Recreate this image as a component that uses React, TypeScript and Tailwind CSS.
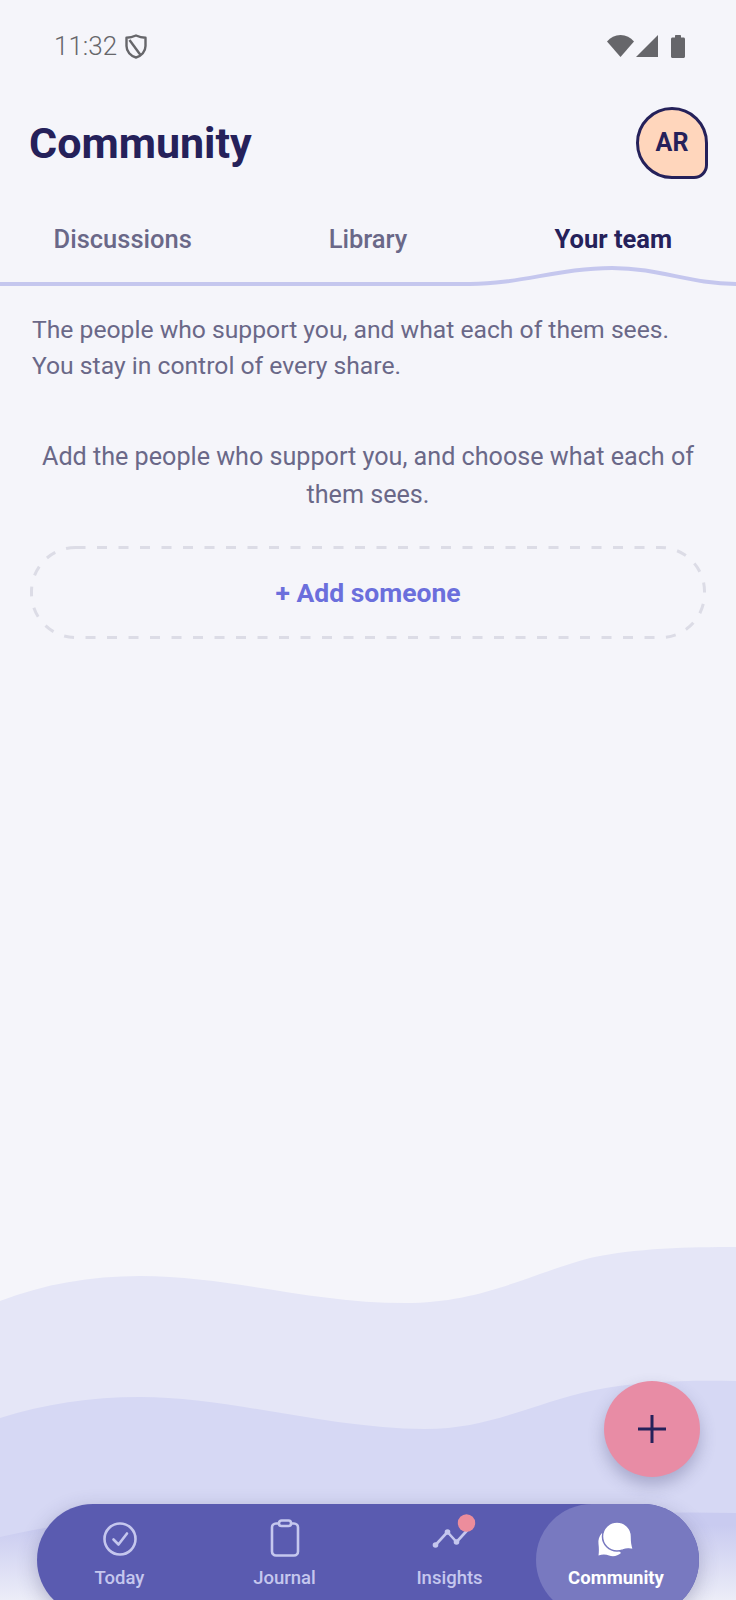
import React from "react";

function Waves() {
  return (
    <svg className="absolute left-0 top-[1200px]" width="736" height="400" viewBox="0 1200 736 400" fill="none">
      <defs>
        <linearGradient id="fade" x1="0" y1="1525" x2="0" y2="1600" gradientUnits="userSpaceOnUse">
          <stop offset="0" stopColor="#c9cbf0" />
          <stop offset="1" stopColor="#ecedf8" />
        </linearGradient>
      </defs>
      <path d="M0 1301 C45 1284 90 1276 140 1276 C230 1276 310 1303 405 1303 C480 1303 525 1276 590 1258 C635 1248 690 1247 736 1247 V1600 H0 Z" fill="#e5e6f7" />
      <path d="M0 1418 C45 1404 90 1397 140 1397 C230 1397 330 1429 425 1429 C490 1429 530 1404 595 1390 C640 1381 690 1380 736 1381 V1600 H0 Z" fill="#d6d8f4" />
      <path d="M0 1537 C45 1527 90 1519 140 1519 C230 1519 330 1548 425 1548 C490 1548 530 1526 595 1517 C640 1512 690 1512 736 1513 V1600 H0 Z" fill="url(#fade)" />
    </svg>
  );
}

function StatusBar() {
  return (
    <div className="flex h-[92px] items-center justify-between pl-[54px] pr-[51px] text-[#66666a]">
      <div className="flex items-center gap-[8px]">
        <span className="text-[26px] font-light leading-none">11:32</span>
        <svg width="22" height="25" viewBox="0 0 22 25" fill="none" stroke="#66666a" strokeWidth="2.400" strokeLinejoin="round">
          <path d="M11 1.500 C14 2.800 17 3.600 20.500 3.800 V12 C20.500 17.500 16.500 22 11 23.500 C5.500 22 1.500 17.500 1.500 12 V3.800 C5 3.600 8 2.800 11 1.500 Z" />
          <path d="M4.500 6 L15.500 21" />
        </svg>
      </div>
      <div className="flex items-center">
        <svg width="27" height="22" viewBox="0 0 27 22" fill="#66666a">
          <path d="M0 6.500 C3.500 2.200 8 0 13.500 0 C19 0 23.500 2.200 27 6.500 L13.500 22 Z" />
        </svg>
        <svg width="22" height="22" viewBox="0 0 22 22" fill="#66666a" className="ml-[2px] mr-[13px]">
          <path d="M22 0 V22 H0 Z" />
        </svg>
        <svg width="14" height="23" viewBox="0 0 14 23" fill="#66666a">
          <path d="M4 2.500 V1 C4 .4 4.400 0 5 0 H9 C9.600 0 10 .4 10 1 V2.500 H12.500 C13.300 2.500 14 3.200 14 4 V21.500 C14 22.300 13.300 23 12.500 23 H1.500 C.7 23 0 22.300 0 21.500 V4 C0 3.200 .7 2.500 1.500 2.500 Z" />
        </svg>
      </div>
    </div>
  );
}

function Header() {
  return (
    <div className="mt-[11px] flex h-[80px] items-center justify-between pl-[29px] pr-[28px]">
      <h1 className="text-[43px] font-bold leading-none text-[#25215a]">Community</h1>
      <div className="flex h-[72px] w-[72px] items-center justify-center rounded-bl-[36px] rounded-br-[14px] rounded-tl-[36px] rounded-tr-[36px] border-[3px] border-[#25215a] bg-[#ffd6bc] text-[25px] font-bold text-[#25215a]">
        AR
      </div>
    </div>
  );
}

function Tabs() {
  return (
    <div className="relative mt-[29px] h-[76px]">
      <div className="grid grid-cols-3 pt-[8px] text-center text-[25.500px] font-medium leading-[38px]">
        <span className="text-[#6a6888]">Discussions</span>
        <span className="text-[#6a6888]">Library</span>
        <span className="font-bold text-[#25215a]">Your team</span>
      </div>
      <svg className="absolute bottom-0 left-0" width="736" height="26" viewBox="0 0 736 26" fill="none">
        <path d="M0 22 H470 C520 22 560 6 612 6 C660 6 690 22 736 22" stroke="#c5c7ee" strokeWidth="4" />
      </svg>
    </div>
  );
}

function TodayIcon() {
  return (
    <svg width="36" height="36" viewBox="0 0 36 36" fill="none" stroke="#c5c7ee" strokeWidth="2.600" strokeLinecap="round" strokeLinejoin="round">
      <circle cx="18" cy="18" r="15.500" />
      <path d="M11.500 18.500 L16.500 23.500 L25 12.500" />
    </svg>
  );
}

function JournalIcon() {
  return (
    <svg width="30" height="38" viewBox="0 0 30 38" fill="none" stroke="#c5c7ee" strokeWidth="2.600" strokeLinejoin="round">
      <rect x="2" y="4.500" width="26" height="32" rx="4" />
      <rect x="9" y="1.500" width="12" height="5.500" rx="2.500" fill="#5a5bb0" />
    </svg>
  );
}

function InsightsIcon() {
  return (
    <svg width="48" height="45" viewBox="0 0 48 45" fill="none" stroke="#c5c7ee" strokeWidth="2.600" strokeLinejoin="round" className="overflow-visible">
      <path d="M9.500 33 L21.500 20 L30.500 30 L41.500 18" />
      <circle cx="9.500" cy="33" r="2.800" fill="#c5c7ee" stroke="none" />
      <circle cx="21.500" cy="20" r="2.800" fill="#c5c7ee" stroke="none" />
      <circle cx="30.500" cy="30" r="2.800" fill="#c5c7ee" stroke="none" />
      <circle cx="40.500" cy="11" r="8.700" fill="#ec8d9c" stroke="none" />
    </svg>
  );
}

function CommunityIcon() {
  return (
    <svg width="36" height="36" viewBox="0 0 36 36">
      <path d="M4 12 C1 15 0 19 0.500 23 C1 27 1 31 0.500 34.500 C4 33 8 33 11 34.500 C15 36 20 35 23 32 Z" fill="#ffffff" />
      <path d="M19 1 C27 1 33.500 7.500 33.500 15.500 C33.500 19 33.500 24 35.500 28.500 C31 27.500 28 27.500 25 29 C22 30 20.500 30 19 30 C11 30 4.500 23.500 4.500 15.500 C4.500 7.500 11 1 19 1 Z" fill="#ffffff" stroke="#7879c0" strokeWidth="1.500" />
    </svg>
  );
}

function NavItem({ icon, label, active }: { icon: React.ReactNode; label: string; active?: boolean }) {
  return (
    <div className={`flex h-[112px] flex-col items-center rounded-full ${active ? "ml-[4px] bg-[#7879c0] pr-[3px]" : ""}`}>
      <div className="flex h-[60px] w-full items-end justify-center pb-[7px]">{icon}</div>
      <span className={`mt-[2px] text-[18.500px] leading-[24px] ${active ? "font-bold text-white" : "font-medium text-[#c5c7ee]"}`}>
        {label}
      </span>
    </div>
  );
}

export default function App() {
  return (
    <div className="relative flex h-[1600px] w-[736px] flex-col overflow-hidden bg-[#f5f5fa] font-['Roboto',sans-serif]">
      <Waves />
      <div className="relative flex flex-1 flex-col">
        <StatusBar />
        <Header />
        <Tabs />
        <p className="mt-[24px] pl-[32px] pr-[20px] text-[24.700px] leading-[36px] text-[#6a6888]">
          The people who support you, and what each of them sees.
          <br />
          You stay in control of every share.
        </p>
        <p className="mt-[54px] px-[30px] text-center text-[25.150px] leading-[38px] text-[#6a6888]">
          Add the people who support you, and choose what each of them sees.
        </p>
        <div className="relative mx-[30px] mt-[32px] flex h-[93px] items-center justify-center text-[26.500px] font-bold text-[#6b6fdc]">
          <svg className="absolute inset-0" width="676" height="93" viewBox="0 0 676 93" fill="none">
            <rect x="1.500" y="1.500" width="673" height="90" rx="44" stroke="#dcdce6" strokeWidth="3" strokeDasharray="10 11.500" />
          </svg>
          <span className="relative">+ Add someone</span>
        </div>
      </div>
      <div className="absolute right-[36px] top-[1381px] flex h-[96px] w-[96px] items-center justify-center rounded-full bg-[#e88ca5] shadow-[0_8px_16px_rgba(60,60,110,0.3)]">
        <svg width="30" height="30" viewBox="0 0 30 30" stroke="#25215a" strokeWidth="3">
          <path d="M15 1 V29 M1 15 H29" />
        </svg>
      </div>
      <div className="relative mx-[37px] mb-[-16px] grid h-[112px] grid-cols-[165px_165px_165px_167px] rounded-full bg-[#5a5bb0] shadow-[0_6px_20px_rgba(50,50,100,0.3)]">
        <NavItem icon={<TodayIcon />} label="Today" />
        <NavItem icon={<JournalIcon />} label="Journal" />
        <NavItem icon={<InsightsIcon />} label="Insights" />
        <NavItem icon={<CommunityIcon />} label="Community" active />
      </div>
    </div>
  );
}
